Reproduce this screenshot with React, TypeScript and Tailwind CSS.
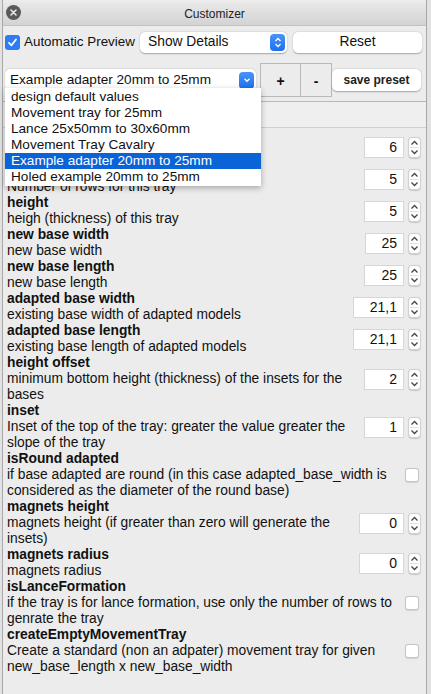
import * as React from "react";

type Param = {
  title: string;
  desc: string[];
  value?: string;
  boxW?: string;
  bool?: boolean;
};

const params: Param[] = [
  { title: "columns", desc: ["Number of columns for this tray"], value: "6", boxW: "w-[40px]" },
  { title: "rows", desc: ["Number of rows for this tray"], value: "5", boxW: "w-[40px]" },
  { title: "height", desc: ["heigh (thickness) of this tray"], value: "5", boxW: "w-[40px]" },
  { title: "new base width", desc: ["new base width"], value: "25", boxW: "w-[39px]" },
  { title: "new base length", desc: ["new base length"], value: "25", boxW: "w-[40px]" },
  { title: "adapted base width", desc: ["existing base width of adapted models"], value: "21,1", boxW: "w-[51px]" },
  { title: "adapted base length", desc: ["existing base length of adapted models"], value: "21,1", boxW: "w-[51px]" },
  {
    title: "height offset",
    desc: ["minimum bottom height (thickness) of the insets for the", "bases"],
    value: "2",
    boxW: "w-[40px]",
  },
  {
    title: "inset",
    desc: ["Inset of the top of the tray: greater the value greater the", "slope of the tray"],
    value: "1",
    boxW: "w-[40px]",
  },
  {
    title: "isRound adapted",
    desc: [
      "if base adapted are round (in this case adapted_base_width is",
      "considered as the diameter of the round base)",
    ],
    bool: true,
  },
  {
    title: "magnets height",
    desc: ["magnets height (if greater than zero will generate the", "insets)"],
    value: "0",
    boxW: "w-[45px]",
  },
  { title: "magnets radius", desc: ["magnets radius"], value: "0", boxW: "w-[45px]" },
  {
    title: "isLanceFormation",
    desc: ["if the tray is for lance formation, use only the number of rows to", "genrate the tray"],
    bool: true,
  },
  {
    title: "createEmptyMovementTray",
    desc: ["Create a standard (non an adpater) movement tray for given", "new_base_length x new_base_width"],
    bool: true,
  },
];

const presets = [
  "design default values",
  "Movement tray for 25mm",
  "Lance 25x50mm to 30x60mm",
  "Movement Tray Cavalry",
  "Example adapter 20mm to 25mm",
  "Holed example 20mm to 25mm",
];

function Stepper() {
  return (
    <div className="flex h-[21px] w-[13px] flex-col items-center justify-center rounded-[4px] border border-[#d0d0d0] bg-white shadow-[0_0.5px_1px_rgba(0,0,0,0.15)]">
      <svg width="9" height="6" viewBox="0 0 9 6" className="mb-[1px]">
        <path d="M1.5 4.5 L4.5 1.5 L7.5 4.5" fill="none" stroke="#444" strokeWidth="1.3" />
      </svg>
      <div className="h-px w-[9px] bg-[#e2e2e2]" />
      <svg width="9" height="6" viewBox="0 0 9 6" className="mt-[1px]">
        <path d="M1.5 1.5 L4.5 4.5 L7.5 1.5" fill="none" stroke="#444" strokeWidth="1.3" />
      </svg>
    </div>
  );
}

function ParamRow({ p }: { p: Param }) {
  return (
    <div className="flex items-center">
      <div className="flex-1 text-[13.8px] leading-[16px] text-[#111] whitespace-nowrap">
        <div className="font-bold">{p.title}</div>
        {p.desc.map((d) => (
          <div key={d}>{d}</div>
        ))}
      </div>
      {p.bool ? (
        <div className="mr-[7px] h-[14px] w-[14px] shrink-0 rounded-[3px] border border-[#c4c4c4] bg-white shadow-[0_0.5px_1px_rgba(0,0,0,0.1)]" />
      ) : (
        <div className="mr-[5px] flex shrink-0 items-center gap-[4px]">
          <div
            className={`${p.boxW} flex h-[21px] items-center justify-end border border-[#d6d6d6] bg-white pr-[6px] text-[14px] text-[#111]`}
          >
            {p.value}
          </div>
          <Stepper />
        </div>
      )}
    </div>
  );
}

export default function App() {
  return (
    <div className="h-[694px] w-[431px] overflow-hidden bg-[#e2e2e2] font-['Liberation_Sans',Arial,sans-serif] text-[#111]">
      <div className="ml-[2px] mr-[4px] flex h-full flex-col border-x border-[#a8a8a8] bg-[#ececec] pt-[2px]">
        {/* title bar */}
        <div className="relative flex h-[24px] items-center justify-center border-b border-[#c2c2c2] bg-gradient-to-b from-[#e9e9e9] to-[#d3d3d3]">
          <div className="absolute left-[3px] top-[3px] flex h-[15px] w-[15px] items-center justify-center rounded-full bg-[#5a5a5a]">
            <svg width="7" height="7" viewBox="0 0 7 7">
              <path d="M1 1 L6 6 M6 1 L1 6" stroke="#e8e8e8" strokeWidth="1.6" strokeLinecap="round" />
            </svg>
          </div>
          <span className="text-[12px] text-[#222]">Customizer</span>
        </div>

        {/* row 1 */}
        <div className="mt-[6px] flex h-[21px] items-center whitespace-nowrap">
          <div className="ml-[2px] flex h-[15px] w-[15px] shrink-0 items-center justify-center rounded-[3px] bg-[#2d7cf6]">
            <svg width="11" height="11" viewBox="0 0 11 11">
              <path d="M2 5.8 L4.5 8.3 L9 2.5" fill="none" stroke="white" strokeWidth="1.8" strokeLinecap="round" strokeLinejoin="round" />
            </svg>
          </div>
          <span className="ml-[4px] w-[114px] shrink-0 text-[13.4px]">Automatic Preview</span>
          <div className="ml-[2px] flex h-[21px] w-[147px] shrink-0 items-center justify-between rounded-[5px] bg-white pl-[8px] pr-[2px] shadow-[0_0.5px_1.5px_rgba(0,0,0,0.3)]">
            <span className="text-[13.8px]">Show Details</span>
            <div className="flex h-[17px] w-[15px] flex-col items-center justify-center rounded-[4px] bg-gradient-to-b from-[#4a93f8] to-[#1d6ff0]">
              <svg width="8" height="5" viewBox="0 0 8 5">
                <path d="M1.5 4 L4 1.5 L6.5 4" fill="none" stroke="white" strokeWidth="1.3" />
              </svg>
              <svg width="8" height="5" viewBox="0 0 8 5" className="mt-[1px]">
                <path d="M1.5 1 L4 3.5 L6.5 1" fill="none" stroke="white" strokeWidth="1.3" />
              </svg>
            </div>
          </div>
          <div className="ml-[6px] flex h-[21px] w-[129px] shrink-0 items-center justify-center rounded-[5px] bg-white text-[13.8px] shadow-[0_0.5px_1.5px_rgba(0,0,0,0.3)]">
            Reset
          </div>
        </div>

        {/* row 2 */}
        <div className="relative mt-[10px] flex h-[34px] items-center whitespace-nowrap">
          <div className="ml-[2px] flex h-[22px] w-[251px] shrink-0 items-center justify-between rounded-[5px] bg-white pl-[5px] pr-[2px] shadow-[0_0.5px_1.5px_rgba(0,0,0,0.3)]">
            <span className="text-[13.6px]">Example adapter 20mm to 25mm</span>
            <div className="flex h-[17px] w-[15px] items-center justify-center rounded-[4px] bg-gradient-to-b from-[#4a93f8] to-[#1d6ff0]">
              <svg width="8" height="6" viewBox="0 0 8 6">
                <path d="M1.5 1.8 L4 4.2 L6.5 1.8" fill="none" stroke="white" strokeWidth="1.4" />
              </svg>
            </div>
          </div>
          <div className="ml-[4px] flex h-[34px] w-[72px] shrink-0 border border-[#b8b8b8] text-[14px] font-bold">
            <div className="flex w-[40px] items-center justify-center border-r border-[#b8b8b8] pt-[2px]">+</div>
            <div className="flex flex-1 items-center justify-center pt-[2px]">-</div>
          </div>
          <div className="flex h-[22px] w-[89px] shrink-0 items-center justify-center rounded-[5px] bg-white text-[12px] font-bold text-[#222] shadow-[0_0.5px_1.5px_rgba(0,0,0,0.3)]">
            save preset
          </div>

          {/* open dropdown */}
          <div className="absolute left-[2px] top-[25px] z-10 w-[256px] bg-white py-px shadow-[0_2px_6px_rgba(0,0,0,0.3)]">
            {presets.map((p) => (
              <div
                key={p}
                className={`h-[16px] pl-[6px] text-[13.6px] leading-[16px] ${
                  p === "Example adapter 20mm to 25mm" ? "bg-[#0b63d8] text-white" : "text-[#111]"
                }`}
              >
                {p}
              </div>
            ))}
          </div>
        </div>

        {/* parameter panel */}
        <div className="mt-[4px] flex flex-1 flex-col border-t border-[#b8b8b8]">
          <div className="h-[26px] border-b border-[#cfcfcf] bg-[#efefef]" />
          <div className="flex flex-col pl-[4px] pt-[3px]">
            {params.map((p) => (
              <ParamRow key={p.title} p={p} />
            ))}
          </div>
        </div>
      </div>
    </div>
  );
}
